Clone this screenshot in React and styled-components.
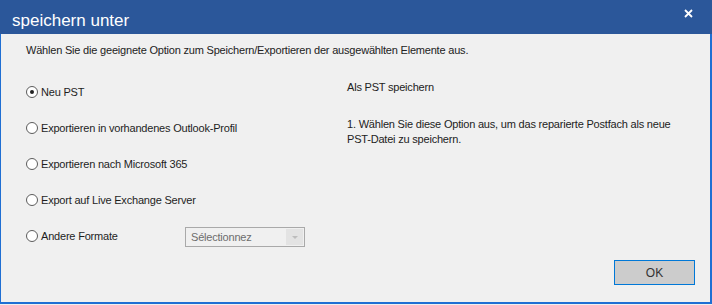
import React from 'react';
import styled, { createGlobalStyle } from 'styled-components';

const GlobalStyle = createGlobalStyle`
  html, body {
    margin: 0;
    padding: 0;
    background: #f0f0f0;
  }
  body {
    font-family: "Liberation Sans", Arial, sans-serif;
  }
`;

const Dialog = styled.div`
  width: 712px;
  height: 304px;
  display: flex;
  flex-direction: column;
  background: #f0f0f0;
`;

const TitleBar = styled.div`
  height: 34px;
  flex: 0 0 34px;
  background: #2b579a;
  display: flex;
  justify-content: space-between;
  align-items: flex-start;
  padding: 0 19px 0 12px;
`;

const Title = styled.div`
  color: #fff;
  font-size: 17px;
  line-height: 20px;
  margin-top: 11px;
`;

const CloseBtn = styled.div`
  width: 10px;
  height: 10px;
  margin-top: 8px;
  display: flex;
  align-items: center;
  justify-content: center;
`;

const Body = styled.div`
  flex: 1;
  display: flex;
  flex-direction: column;
  border: solid #1f6fd3;
  border-width: 0 2px 2px 1px;
  font-size: 11px;
  letter-spacing: -0.2px;
`;

const Intro = styled.div`
  line-height: 14px;
  color: #222;
  padding: 9px 0 0 25px;
`;

const Main = styled.div`
  display: flex;
  padding: 17px 0 0 25px;
`;

const Options = styled.div`
  width: 321px;
  display: flex;
  flex-direction: column;
`;

const OptionRow = styled.div`
  height: 36px;
  display: grid;
  grid-template-columns: ${({ $withSelect }) => ($withSelect ? '159px 120px' : '1fr')};
  align-items: center;
`;

const Option = styled.label`
  display: flex;
  align-items: center;
  gap: 3px;
  color: #1e1e1e;
`;

const Radio = styled.span`
  width: 10px;
  height: 10px;
  border-radius: 50%;
  border: 1px solid #5c5c5c;
  background: #fff;
  display: flex;
  align-items: center;
  justify-content: center;
  &::after {
    content: '';
    width: 4px;
    height: 4px;
    border-radius: 50%;
    background: ${({ $checked }) => ($checked ? '#222' : 'transparent')};
  }
`;

const Select = styled.div`
  height: 20px;
  box-sizing: border-box;
  border: 1px solid #a9a9a9;
  background: #f0f0f0;
  display: flex;
  align-items: stretch;
  padding: 1px;
  margin-top: 2px;
`;

const SelectText = styled.span`
  flex: 1;
  color: #6d6d6d;
  display: flex;
  align-items: center;
  padding-left: 4px;
`;

const SelectArrow = styled.span`
  width: 17px;
  background: #e3e3e3;
  display: flex;
  align-items: center;
  justify-content: center;
  &::after {
    content: '';
    border-left: 3px solid transparent;
    border-right: 3px solid transparent;
    border-top: 3px solid #bdbdbd;
  }
`;

const Info = styled.div`
  width: 340px;
  padding-top: 6px;
  line-height: 15px;
  color: #222;
`;

const InfoTitle = styled.div`
  margin-bottom: 22px;
`;

const Footer = styled.div`
  margin-top: auto;
  display: flex;
  justify-content: flex-end;
  padding: 0 15px 17px 0;
`;

const OkButton = styled.button`
  width: 81px;
  height: 25px;
  background: #cccccc;
  border: 1px solid #0078d7;
  font-family: "Liberation Sans", Arial, sans-serif;
  font-size: 12px;
  color: #333;
  padding: 0;
`;

const options = [
  'Neu PST',
  'Exportieren in vorhandenes Outlook-Profil',
  'Exportieren nach Microsoft 365',
  'Export auf Live Exchange Server',
];

export default function App() {
  return (
    <Dialog>
      <GlobalStyle />
      <TitleBar>
        <Title>speichern unter</Title>
        <CloseBtn>
          <svg width="9" height="9" viewBox="0 0 9 9">
            <path d="M1 1L8 8M8 1L1 8" stroke="#fff" strokeWidth="1.8" />
          </svg>
        </CloseBtn>
      </TitleBar>
      <Body>
        <Intro>Wählen Sie die geeignete Option zum Speichern/Exportieren der ausgewählten Elemente aus.</Intro>
        <Main>
          <Options>
            {options.map((o, i) => (
              <OptionRow key={o}>
                <Option>
                  <Radio $checked={i === 0} />
                  {o}
                </Option>
              </OptionRow>
            ))}
            <OptionRow $withSelect>
              <Option>
                <Radio />
                Andere Formate
              </Option>
              <Select>
                <SelectText>Sélectionnez</SelectText>
                <SelectArrow />
              </Select>
            </OptionRow>
          </Options>
          <Info>
            <InfoTitle>Als PST speichern</InfoTitle>
            <div>1. Wählen Sie diese Option aus, um das reparierte Postfach als neue PST-Datei zu speichern.</div>
          </Info>
        </Main>
        <Footer>
          <OkButton>OK</OkButton>
        </Footer>
      </Body>
    </Dialog>
  );
}
